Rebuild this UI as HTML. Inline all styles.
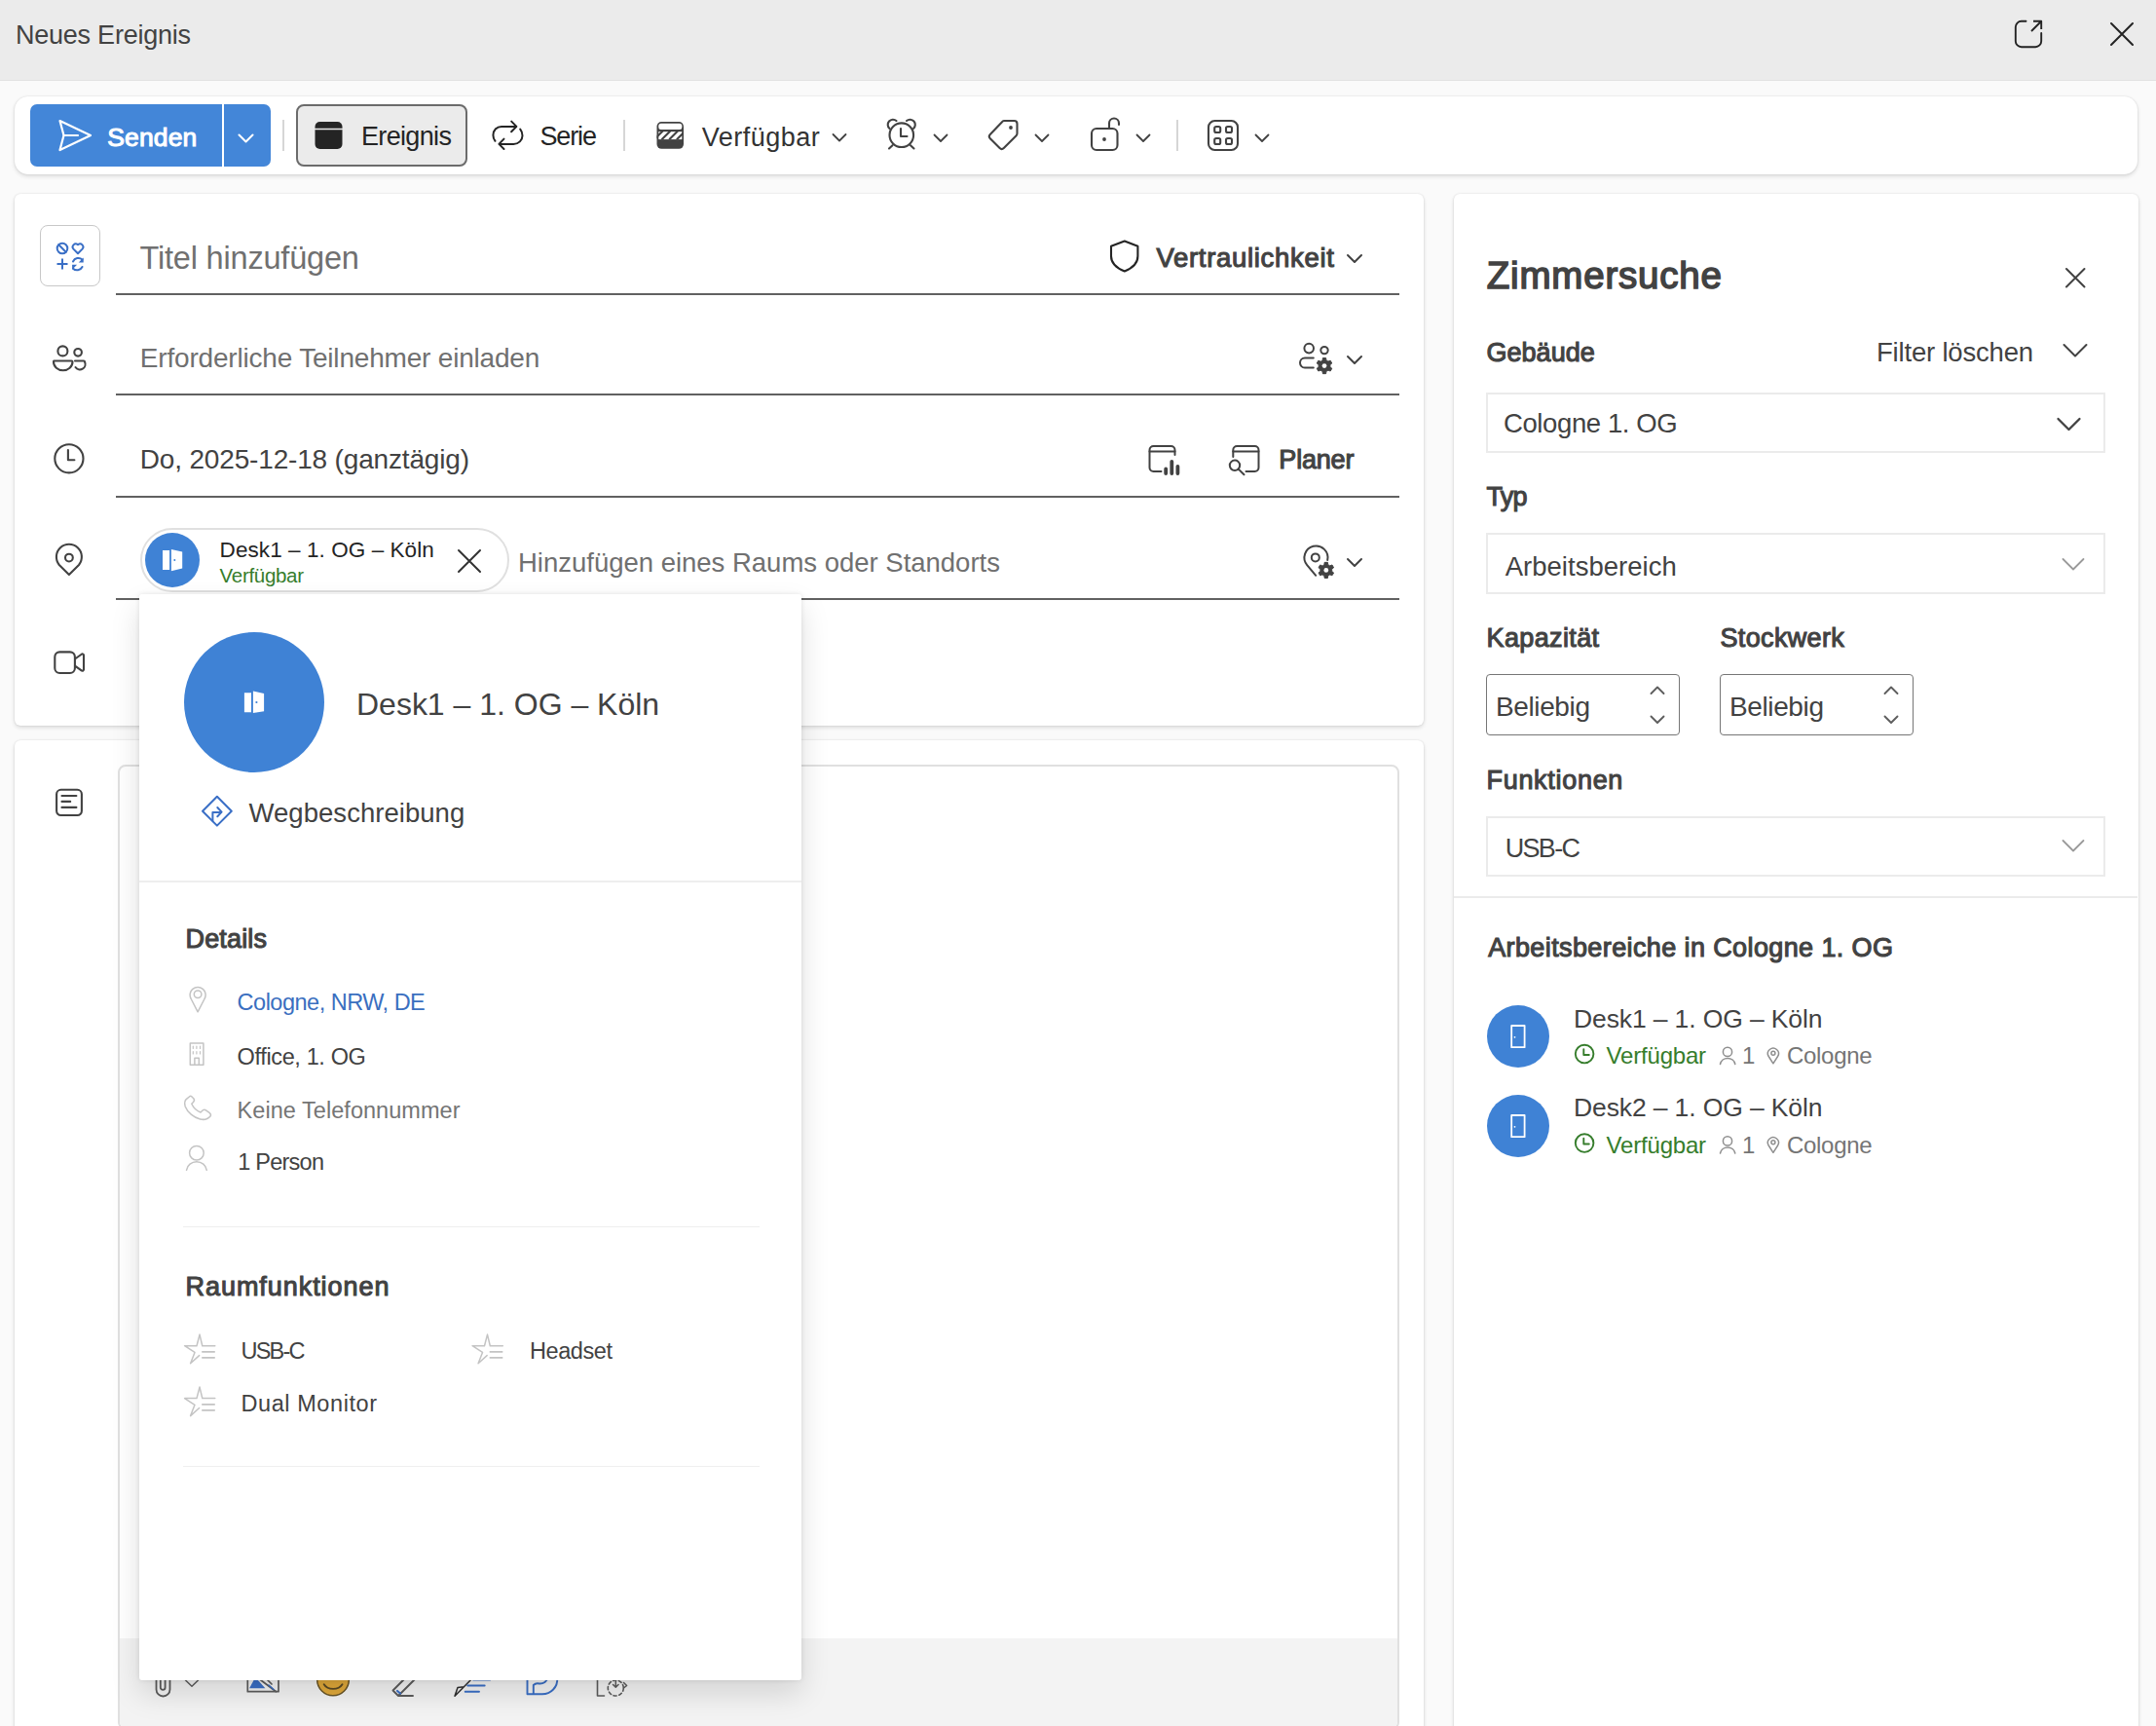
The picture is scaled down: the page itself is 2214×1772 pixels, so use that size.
<!DOCTYPE html>
<html><head><meta charset="utf-8"><title>Neues Ereignis</title>
<style>
html,body{margin:0;padding:0;}
body{width:2214px;height:1772px;position:relative;overflow:hidden;background:#fafafa;font-family:"Liberation Sans",sans-serif;}
.a{position:absolute;box-sizing:border-box;}
.t{position:absolute;white-space:nowrap;line-height:1;font-family:"Liberation Sans",sans-serif;}
svg{position:absolute;overflow:visible;}
</style></head><body>
<!-- title bar -->
<div class="a" style="left:0;top:0;width:2214px;height:82px;background:#ebebeb;"></div>
<div class="a" style="left:0;top:82px;width:2214px;height:1px;background:#e2e2e2;"></div>
<!-- toolbar card -->
<div class="a" style="left:14.5px;top:98.5px;width:2180.5px;height:80.5px;background:#fff;border-radius:14px;box-shadow:0 2px 4px rgba(0,0,0,.13),0 0 2px rgba(0,0,0,.12);"></div>
<!-- send button -->
<div class="a" style="left:31px;top:107px;width:247px;height:64px;background:#4386d8;border-radius:7px;"></div>
<div class="a" style="left:228px;top:107px;width:2px;height:64px;background:#fff;"></div>
<!-- separators -->
<div class="a" style="left:290px;top:123px;width:2px;height:32px;background:#d6d6d6;"></div>
<div class="a" style="left:640px;top:123px;width:2px;height:32px;background:#d6d6d6;"></div>
<div class="a" style="left:1208px;top:123px;width:2px;height:32px;background:#d6d6d6;"></div>
<!-- Ereignis button -->
<div class="a" style="left:304px;top:107px;width:176px;height:64px;background:#ebebeb;border:2px solid #6b6b6b;border-radius:8px;"></div>

<!-- card 1 -->
<div class="a" style="left:14.5px;top:198.5px;width:1447px;height:546px;background:#fff;border-radius:6px;box-shadow:0 2px 4px rgba(0,0,0,.13),0 0 2px rgba(0,0,0,.12);"></div>
<!-- card 2 -->
<div class="a" style="left:14.5px;top:759.5px;width:1447px;height:1100px;background:#fff;border-radius:6px;box-shadow:0 2px 4px rgba(0,0,0,.13),0 0 2px rgba(0,0,0,.12);"></div>
<!-- right panel -->
<div class="a" style="left:1492.5px;top:198.5px;width:703px;height:1650px;background:#fff;border-radius:6px;box-shadow:0 2px 4px rgba(0,0,0,.13),0 0 2px rgba(0,0,0,.12);"></div>

<!-- icon box -->
<div class="a" style="left:41.3px;top:231.2px;width:61.4px;height:63.3px;border:1.6px solid #c8c8c8;border-radius:8px;background:#fff;"></div>
<!-- underlines -->
<div class="a" style="left:119px;top:301px;width:1318px;height:2px;background:#616161;"></div>
<div class="a" style="left:119px;top:404px;width:1318px;height:2px;background:#616161;"></div>
<div class="a" style="left:119px;top:509px;width:1318px;height:2px;background:#616161;"></div>
<div class="a" style="left:119px;top:614px;width:1318px;height:2px;background:#616161;"></div>
<!-- chip -->
<div class="a" style="left:143.5px;top:541.5px;width:379px;height:66.5px;border:2px solid #e0e0e0;border-radius:34px;background:#fff;"></div>
<div class="a" style="left:149px;top:547px;width:56px;height:56px;border-radius:50%;background:#3f82d5;"></div>

<!-- editor -->
<div class="a" style="left:121px;top:784.5px;width:1315.5px;height:991px;border:2px solid #e0e0e0;border-radius:8px;background:#fff;overflow:hidden;">
  <div class="a" style="left:0;top:895.5px;width:1315px;height:100px;background:#f3f3f3;"></div>
</div>

<div class="t" style="left:16.0px;top:23.4px;font-size:27px;font-weight:400;color:#424242;letter-spacing:-0.24px;">Neues Ereignis</div>
<div class="t" style="left:110.2px;top:127.5px;font-size:26.5px;font-weight:400;color:#fff;letter-spacing:0.16px;-webkit-text-stroke:1.06px #fff;">Senden</div>
<div class="t" style="left:371.0px;top:127.0px;font-size:27px;font-weight:400;color:#242424;letter-spacing:-0.66px;">Ereignis</div>
<div class="t" style="left:554.5px;top:127.0px;font-size:27px;font-weight:400;color:#242424;letter-spacing:-1.14px;">Serie</div>
<div class="t" style="left:720.7px;top:127.6px;font-size:27px;font-weight:400;color:#333333;letter-spacing:0.49px;">Verfügbar</div>
<div class="t" style="left:143.5px;top:249.4px;font-size:32.5px;font-weight:400;color:#707070;letter-spacing:-0.19px;">Titel hinzufügen</div>
<div class="t" style="left:1187.5px;top:250.6px;font-size:27.5px;font-weight:400;color:#424242;letter-spacing:0.69px;-webkit-text-stroke:1.10px #424242;">Vertraulichkeit</div>
<div class="t" style="left:143.8px;top:354.2px;font-size:28px;font-weight:400;color:#707070;letter-spacing:-0.19px;">Erforderliche Teilnehmer einladen</div>
<div class="t" style="left:143.8px;top:458.2px;font-size:28px;font-weight:400;color:#424242;letter-spacing:-0.17px;">Do, 2025-12-18 (ganztägig)</div>
<div class="t" style="left:1313.3px;top:459.1px;font-size:27.0px;font-weight:400;color:#424242;letter-spacing:-0.18px;-webkit-text-stroke:1.08px #424242;">Planer</div>
<div class="t" style="left:225.6px;top:553.5px;font-size:22.5px;font-weight:400;color:#242424;letter-spacing:0.07px;">Desk1 – 1. OG – Köln</div>
<div class="t" style="left:225.6px;top:580.6px;font-size:20.5px;font-weight:400;color:#367d2c;letter-spacing:-0.31px;">Verfügbar</div>
<div class="t" style="left:532.0px;top:563.6px;font-size:27.5px;font-weight:400;color:#707070;letter-spacing:-0.01px;">Hinzufügen eines Raums oder Standorts</div>
<svg style="left:0;top:0" width="2214" height="1772" viewBox="0 0 2214 1772" fill="none" stroke-linecap="round" stroke-linejoin="round">
<!-- title bar popout -->
<g stroke="#242424" stroke-width="1.9">
  <path d="M2080.5,21.8 H2075.8 A6,6 0 0 0 2069.8,27.8 V42.2 A6,6 0 0 0 2075.8,48.2 H2090.2 A6,6 0 0 0 2096.2,42.2 V34"/>
  <path d="M2086,32 L2095.5,22.5 M2088,21.8 H2096.2 V30" stroke-linecap="butt"/>
  <path d="M2168,24 L2190,46 M2190,24 L2168,46" stroke-width="2"/>
</g>
<!-- send icon -->
<g stroke="#fff" stroke-width="2.2">
  <path d="M61.5,124 L93,139 L61.5,154 L65.5,139 Z"/>
  <path d="M65.5,139 H80"/>
  <path d="M245.5,138.5 L252.5,145.5 L259.5,138.5" stroke-width="2"/>
</g>
<!-- Ereignis icon -->
<rect x="323.5" y="125" width="28" height="28" rx="5" fill="#242424"/>
<path d="M323.5,132.5 H351.5" stroke="#ebebeb" stroke-width="1.6"/>
<!-- Serie icon -->
<g stroke="#242424" stroke-width="2">
  <path d="M508.5,144.8 C507,142.8 506.4,140.8 506.4,138.7 C506.4,133.8 510,129.9 515,129.9 H530"/>
  <path d="M525.2,124.6 L530.4,129.9 L525.1,135.3"/>
  <path d="M534.2,132.6 C535.7,134.5 536.5,136.8 536.5,139.2 C536.5,144 532.5,147.9 527.3,147.9 H513"/>
  <path d="M517.5,142.6 L512.4,147.9 L517.5,153"/>
</g>
<!-- Verfuegbar icon -->
<defs><clipPath id="vb"><rect x="674.5" y="125" width="27.5" height="27.8" rx="4.8"/></clipPath>
<clipPath id="vb2"><rect x="674" y="135" width="30" height="8.2"/></clipPath></defs>
<g clip-path="url(#vb)">
  <rect x="674" y="124" width="30" height="30" fill="#424242"/>
  <rect x="676.3" y="126.8" width="24" height="6.3" rx="2.5" fill="#fff"/>
  <rect x="676.3" y="135.2" width="24" height="7.9" fill="#fff"/>
  <g clip-path="url(#vb2)" stroke="#424242" stroke-width="2.1" stroke-linecap="butt">
    <path d="M680.6,134.5 L671.8,143.3 M688.3,134.5 L679.5,143.3 M696,134.5 L687.2,143.3 M703.7,134.5 L694.9,143.3"/>
  </g>
</g>
<g stroke="#424242" stroke-width="1.8">
  <path d="M855.5,138 L862,144.5 L868.5,138"/>
  <path d="M959.5,138.5 L966,145 L972.5,138.5"/>
  <path d="M1063.5,138.5 L1070,145 L1076.5,138.5"/>
  <path d="M1167.5,138.5 L1174,145 L1180.5,138.5"/>
  <path d="M1289.5,138.5 L1296,145 L1302.5,138.5"/>
</g>
<!-- alarm -->
<g stroke="#424242" stroke-width="2.1">
  <circle cx="925.8" cy="138.7" r="12.3"/>
  <path d="M913.5,132 A5.2,5.2 0 0 1 920.5,124"/>
  <path d="M938,132 A5.2,5.2 0 0 0 931,124"/>
  <path d="M925,132 V140 H931.5"/>
  <path d="M913,152.5 L916.5,149.2 M938.5,152.5 L935,149.2"/>
</g>
<!-- tag -->
<g stroke="#424242" stroke-width="2.1">
  <path d="M1031,124 H1041.5 A3,3 0 0 1 1044.5,127 V137 A3,3 0 0 1 1043.6,139.2 L1030.8,152 A3,3 0 0 1 1026.6,152 L1016.8,142.2 A3,3 0 0 1 1016.8,138 L1029,125.2 A3,3 0 0 1 1031,124 Z"/>
</g>
<circle cx="1038" cy="131" r="1.9" fill="#424242"/>
<!-- lock -->
<g stroke="#424242" stroke-width="2.1">
  <rect x="1121" y="132" width="26.5" height="22" rx="5"/>
  <path d="M1139,132 V126.5 A5,5 0 0 1 1149,126.5 V128"/>
</g>
<circle cx="1134" cy="143" r="1.9" fill="#424242"/>
<!-- apps -->
<g stroke="#424242" stroke-width="2.1">
  <rect x="1241" y="124" width="30" height="30" rx="6.5"/>
  <rect x="1247.2" y="130" width="6" height="6" rx="1.8"/>
  <rect x="1259" y="130" width="6" height="6" rx="1.8"/>
  <rect x="1247.2" y="142" width="6" height="6" rx="1.8"/>
  <rect x="1259" y="142" width="6" height="6" rx="1.8"/>
</g>

<!-- icon box contents (blue) -->
<g stroke="#3a6fc6" stroke-width="2">
  <circle cx="64" cy="255" r="5.3"/>
  <path d="M60.3,251.3 L67.7,258.7"/>
  <path d="M80,260.3 L75.4,255.6 A3.2,3.2 0 0 1 79.8,251 L80,251.2 L80.2,251 A3.2,3.2 0 0 1 84.6,255.6 Z"/>
  <path d="M58.5,271 H69.5 M64,265.5 V276.5" stroke-linecap="butt"/>
  <path d="M75,268.5 A6,6 0 0 1 84.5,266.5"/>
  <path d="M84.5,274 A6,6 0 0 1 75,275.7"/>
</g>
<path d="M85.7,264.5 V269.5 H80.7 Z M74.1,276.7 V271.7 H79.1 Z" fill="#3a6fc6"/>

<!-- left column icons -->
<g stroke="#424242" stroke-width="2.1">
  <circle cx="64.4" cy="360.4" r="5"/>
  <circle cx="80.1" cy="361.8" r="3.8"/>
  <path d="M55.5,370.5 H73.5 A1,1 0 0 1 74.5,371.5 A9.5,8.5 0 0 1 55,371.5 A1,1 0 0 1 55.5,370.5 Z"/>
  <path d="M77,370.5 H86 A1,1 0 0 1 87,371.5 A5.5,5.5 0 0 1 77.5,377"/>
  <circle cx="70.9" cy="470.8" r="14.6"/>
  <path d="M69.9,462 V472.2 H76.4"/>
  <path d="M70.9,590 L81,580 A13,13 0 1 0 60.8,580 Z"/>
  <circle cx="70.9" cy="572.6" r="3.9"/>
  <rect x="56.3" y="669.4" width="20.6" height="21.6" rx="5"/>
  <path d="M77,676.5 L84,671.5 A1.5,1.5 0 0 1 86,672.8 V687.4 A1.5,1.5 0 0 1 84,688.6 L77,683.6"/>
  <rect x="58.1" y="810.8" width="25.8" height="26.2" rx="4.5"/>
  <path d="M63.5,817 H78.4 M63.5,822.9 H72.2 M63.5,828.9 H78.4"/>
</g>

<!-- shield -->
<path d="M1154.8,247.5 L1141,252.8 V263 C1141,270 1146,275 1154.8,278.4 C1163.6,275 1168.4,270 1168.4,263 V252.8 Z" stroke="#242424" stroke-width="2.1"/>
<path d="M1384,262 L1391,269 L1398,262" stroke="#424242" stroke-width="2"/>

<!-- people gear -->
<g stroke="#424242" stroke-width="2">
  <circle cx="1344.2" cy="357.6" r="4.8"/>
  <circle cx="1360" cy="359.6" r="3.7"/>
  <path d="M1348.8,367.6 H1340 A5,5 0 0 0 1340,377.6 H1348.8"/>
  <path d="M1384,366 L1391,373 L1398,366"/>
</g>
<!-- gears -->
<path d="M1358.09,369.91 L1358.38,367.56 L1361.62,367.56 L1361.91,369.91 L1363.97,371.10 L1366.15,370.18 L1367.77,372.98 L1365.88,374.41 L1365.88,376.79 L1367.77,378.22 L1366.15,381.02 L1363.97,380.10 L1361.91,381.29 L1361.62,383.64 L1358.38,383.64 L1358.09,381.29 L1356.03,380.10 L1353.85,381.02 L1352.23,378.22 L1354.12,376.79 L1354.12,374.41 L1352.23,372.98 L1353.85,370.18 L1356.03,371.10 Z" fill="#424242" stroke="#424242" stroke-width="1" stroke-linejoin="round"/>
<circle cx="1360" cy="375.6" r="2.4" fill="#fff"/>
<!-- calendar chart -->
<g stroke="#424242" stroke-width="2">
  <path d="M1192.5,484 H1184.5 A4,4 0 0 1 1180.5,480 V462 A4,4 0 0 1 1184.5,458 H1202.5 A4,4 0 0 1 1206.5,462 V467"/>
  <path d="M1180.5,463.6 H1206.5"/>
  <path d="M1197.2,481.5 V486 M1203.3,473.8 V486 M1209.4,478.8 V486" stroke-width="3.8"/>
</g>
<!-- planer icon -->
<g stroke="#424242" stroke-width="2">
  <path d="M1266.3,469 V462 A4,4 0 0 1 1270.3,458 H1288.5 A4,4 0 0 1 1292.5,462 V480 A4,4 0 0 1 1288.5,484 H1279.5"/>
  <path d="M1266.3,463.6 H1292.5"/>
  <circle cx="1268" cy="477.8" r="5.2"/>
  <path d="M1271.8,481.6 L1277.5,487.3"/>
</g>
<!-- chip door icon -->
<path d="M167,565 H174.1 V585 H167 Z M175.9,564 L187.2,566.5 V583.4 L175.9,586.3 Z" fill="#fff"/>
<circle cx="179.3" cy="575" r="1" fill="#3f82d5"/>
<path d="M471,565 L493,587 M493,565 L471,587" stroke="#333333" stroke-width="2"/>
<!-- pin gear -->
<g stroke="#424242" stroke-width="2">
  <path d="M1351.2,590.8 L1342.2,580.1 A12,12 0 1 1 1363.2,575"/>
  <circle cx="1350.8" cy="572.4" r="4"/>
  <path d="M1384,574 L1391,581 L1398,574"/>
</g>
<path d="M1359.89,579.71 L1360.18,577.36 L1363.42,577.36 L1363.71,579.71 L1365.77,580.90 L1367.95,579.98 L1369.57,582.78 L1367.68,584.21 L1367.68,586.59 L1369.57,588.02 L1367.95,590.82 L1365.77,589.90 L1363.71,591.09 L1363.42,593.44 L1360.18,593.44 L1359.89,591.09 L1357.83,589.90 L1355.65,590.82 L1354.03,588.02 L1355.92,586.59 L1355.92,584.21 L1354.03,582.78 L1355.65,579.98 L1357.83,580.90 Z" fill="#424242" stroke="#424242" stroke-width="1" stroke-linejoin="round"/>
<circle cx="1361.8" cy="585.4" r="2.4" fill="#fff"/>

<!-- editor toolbar icons (mostly hidden) -->
<g stroke="#5c5c5c" stroke-width="1.8" fill="none">
  <path d="M160.5,1712 V1734.5 A7,7 0 0 0 174.5,1734.5 V1712"/>
  <path d="M164.8,1712 V1732.5 A2.4,2.4 0 0 0 169.6,1732.5 V1712"/>
  <path d="M190.5,1725 L197,1731.3 L203.5,1725" stroke-width="1.5"/>
  <path d="M254.3,1712 V1736.7 H286 V1712" stroke-width="1.7"/>
  <path d="M264,1722 L283.5,1736.7 M272,1722 L279,1729" stroke-width="1.7"/>
  <path d="M403.5,1735.5 L418,1721 M403.5,1735.5 L409,1741 L428,1722 M409,1741 H424" stroke-width="1.9"/>
  <path d="M467,1741.2 L470,1732.5 L476.4,1731.8 L492,1716 M467,1741.2 L476.4,1731.8" stroke="#2e2e2e" stroke-width="1.5"/>
  <path d="M613.5,1722 V1741 H620.5" stroke-width="1.6"/>
  <circle cx="632.3" cy="1733" r="8" stroke-dasharray="3.2 2.6" stroke-width="1.6"/>
  <path d="M632.3,1722 V1732 M629.5,1729.5 L632.3,1732.3 L635,1729.5 M640.5,1727.5 L643.6,1730.5 L640.5,1733" stroke-width="1.5"/>
</g>
<path d="M256.1,1733.3 L262.2,1722 L272.4,1733.3 Z" fill="#3a6fc6"/>
<path d="M276,1730 L281,1734.5" stroke="#3a6fc6" stroke-width="1.5"/>
<circle cx="342" cy="1724.5" r="16.3" fill="#e0a93a" stroke="#6a5526" stroke-width="1.5"/>
<path d="M332.7,1729.2 A10.5,8.5 0 0 0 351.5,1729.2" stroke="#5a4a26" stroke-width="1.9"/>
<path d="M408,1736 L411,1738.5" stroke="#3a6fc6" stroke-width="2.2"/>
<g stroke="#3a6fc6" stroke-width="1.9" fill="none">
  <path d="M480.2,1730.5 H497.7 M477.7,1736.8 H492 M486,1724.5 H503.3"/>
  <path d="M541.5,1720 V1739.3 H556.6 A15.5,15 0 0 0 572.2,1723"/>
  <path d="M547.8,1739 V1730 A6,6 0 0 1 553.8,1728.5 A8.5,8.5 0 0 0 562.8,1722"/>
</g>
</svg>


<!-- popup -->
<div class="a" style="left:143px;top:609.5px;width:680px;height:1115px;background:#fff;border-radius:3px;box-shadow:0 14px 30px rgba(0,0,0,.13),0 0 5px rgba(0,0,0,.10);">
  <div class="a" style="left:0;top:294px;width:680px;height:2px;background:#eeeeee;"></div>
  <div class="a" style="left:45px;top:649px;width:592px;height:1.5px;background:#efefef;"></div>
  <div class="a" style="left:45px;top:895px;width:592px;height:1.5px;background:#efefef;"></div>
</div>
<div class="a" style="left:189px;top:649px;width:144px;height:144px;border-radius:50%;background:#3f82d5;"></div>
<div class="t" style="left:366.0px;top:706.8px;font-size:32px;font-weight:400;color:#424242;letter-spacing:-0.01px;">Desk1 – 1. OG – Köln</div>
<div class="t" style="left:255.5px;top:821.3px;font-size:27.5px;font-weight:400;color:#424242;letter-spacing:0.04px;">Wegbeschreibung</div>
<div class="t" style="left:190.5px;top:950.5px;font-size:27.0px;font-weight:400;color:#424242;letter-spacing:0.16px;-webkit-text-stroke:1.08px #424242;">Details</div>
<div class="t" style="left:243.6px;top:1018.4px;font-size:23.5px;font-weight:400;color:#3a6fc0;letter-spacing:-0.50px;">Cologne, NRW, DE</div>
<div class="t" style="left:243.6px;top:1074.3px;font-size:23.5px;font-weight:400;color:#424242;letter-spacing:-0.37px;">Office, 1. OG</div>
<div class="t" style="left:243.6px;top:1128.8px;font-size:23.5px;font-weight:400;color:#757575;letter-spacing:0.04px;">Keine Telefonnummer</div>
<div class="t" style="left:244.3px;top:1182.4px;font-size:23.5px;font-weight:400;color:#424242;letter-spacing:-0.77px;">1 Person</div>
<div class="t" style="left:190.5px;top:1307.6px;font-size:27.0px;font-weight:400;color:#424242;letter-spacing:0.95px;-webkit-text-stroke:1.08px #424242;">Raumfunktionen</div>
<div class="t" style="left:247.5px;top:1375.6px;font-size:23.5px;font-weight:400;color:#424242;letter-spacing:-1.80px;">USB-C</div>
<div class="t" style="left:544.0px;top:1375.6px;font-size:23.5px;font-weight:400;color:#424242;letter-spacing:-0.42px;">Headset</div>
<div class="t" style="left:247.5px;top:1429.8px;font-size:23.5px;font-weight:400;color:#424242;letter-spacing:0.57px;">Dual Monitor</div>
<svg style="left:0;top:0" width="2214" height="1772" viewBox="0 0 2214 1772" fill="none" stroke-linecap="round" stroke-linejoin="round">
<!-- big door -->
<path d="M250.9,711.2 H258 V731.2 H250.9 Z M259.9,709.5 L271.1,712 V730.3 L259.9,732.1 Z" fill="#fff"/>
<circle cx="263.4" cy="721" r="1.1" fill="#3f82d5"/>
<!-- wegbeschreibung -->
<g stroke="#3a6fc6" stroke-width="2">
  <path d="M222.9,817.8 L237.8,832.7 L222.9,847.6 L208,832.7 Z"/>
  <path d="M218.4,842.5 V834 H227"/>
  <path d="M223.3,829 L227.6,833.6 L223.3,838.2"/>
</g>
<!-- details icons -->
<g stroke="#c4c4c4" stroke-width="1.5">
  <path d="M203.1,1038.8 L210,1025.5 A8,8 0 1 0 196.2,1025.5 Z"/>
  <circle cx="203.1" cy="1020.8" r="3.8"/>
  <rect x="195.3" y="1071" width="13.6" height="22.2"/>
  <path d="M199.9,1093 V1086.3 H204.3 V1093"/>
  <path d="M198.3,1074 V1076.5 M201.9,1074 V1076.5 M205.5,1074 V1076.5 M198.3,1079.5 V1082 M201.9,1079.5 V1082 M205.5,1079.5 V1082" stroke-width="1.2"/>
  <path d="M192.5,1127.5 C190,1129 188.8,1131.5 190.2,1136 C192.5,1142 199,1147.5 205.5,1149 C210,1150 213.5,1149 216,1146 C217,1144.5 216.5,1143.5 215,1142.3 L211.5,1139.8 C210,1138.8 208.8,1139 207.5,1140.5 L206,1142 C202,1140.5 198.5,1137 196.8,1133.3 L198.5,1131.5 C199.8,1130.2 199.8,1129 198.8,1127.8 L196.5,1125.5 C195.3,1124.5 194,1126.5 192.5,1127.5 Z"/>
  <circle cx="201.9" cy="1183.7" r="7.3"/>
  <path d="M191.5,1201.3 A10.5,10 0 0 1 212.3,1201.3"/>
</g>
<!-- stars -->
<g id="star" stroke="#c4c4c4" stroke-width="1.5">
  <path d="M204.6,1391.6 L195.6,1399.7 L200,1388.4 L189.6,1381.7 H202 L205,1370.1 L207.8,1381.7 H220.8"/>
  <path d="M207.2,1387.9 H220.8 M207.2,1393.9 H220.8" stroke-width="1.8" stroke-linecap="butt"/>
</g>
<use href="#star" x="0" y="53.9"/>
<use href="#star" x="295.5" y="0"/>
</svg>


<!-- right panel parts -->
<div class="a" style="left:1526px;top:403px;width:636px;height:62px;border:2px solid #ebebeb;"></div>
<div class="a" style="left:1526px;top:547px;width:636px;height:63px;border:2px solid #ebebeb;"></div>
<div class="a" style="left:1526px;top:692px;width:199px;height:63px;border:1.7px solid #767676;border-radius:4px;"></div>
<div class="a" style="left:1766px;top:692px;width:199px;height:63px;border:1.7px solid #767676;border-radius:4px;"></div>
<div class="a" style="left:1526px;top:838px;width:636px;height:62px;border:2px solid #ebebeb;"></div>
<div class="a" style="left:1493px;top:920px;width:702px;height:2px;background:#ebebeb;"></div>
<div class="a" style="left:1527px;top:1032px;width:64px;height:64px;border-radius:50%;background:#3f82d5;"></div>
<div class="a" style="left:1527px;top:1124px;width:64px;height:64px;border-radius:50%;background:#3f82d5;"></div>
<div class="t" style="left:1526.8px;top:263.5px;font-size:38.5px;font-weight:400;color:#424242;letter-spacing:0.80px;-webkit-text-stroke:1.54px #424242;">Zimmersuche</div>
<div class="t" style="left:1526.5px;top:348.6px;font-size:27.0px;font-weight:400;color:#424242;letter-spacing:0.02px;-webkit-text-stroke:1.08px #424242;">Gebäude</div>
<div class="t" style="left:1927.0px;top:348.1px;font-size:27.5px;font-weight:400;color:#424242;letter-spacing:-0.19px;">Filter löschen</div>
<div class="t" style="left:1544.0px;top:421.3px;font-size:27.5px;font-weight:400;color:#424242;letter-spacing:-0.39px;">Cologne 1. OG</div>
<div class="t" style="left:1526.5px;top:497.1px;font-size:27.0px;font-weight:400;color:#424242;letter-spacing:-0.78px;-webkit-text-stroke:1.08px #424242;">Typ</div>
<div class="t" style="left:1545.7px;top:568.4px;font-size:27.5px;font-weight:400;color:#424242;letter-spacing:0.02px;">Arbeitsbereich</div>
<div class="t" style="left:1526.5px;top:642.3px;font-size:27.0px;font-weight:400;color:#424242;letter-spacing:0.38px;-webkit-text-stroke:1.08px #424242;">Kapazität</div>
<div class="t" style="left:1766.5px;top:642.3px;font-size:27.0px;font-weight:400;color:#424242;letter-spacing:0.34px;-webkit-text-stroke:1.08px #424242;">Stockwerk</div>
<div class="t" style="left:1536.0px;top:712.0px;font-size:28px;font-weight:400;color:#424242;letter-spacing:-0.38px;">Beliebig</div>
<div class="t" style="left:1776.0px;top:712.0px;font-size:28px;font-weight:400;color:#424242;letter-spacing:-0.38px;">Beliebig</div>
<div class="t" style="left:1526.5px;top:787.8px;font-size:27.0px;font-weight:400;color:#424242;letter-spacing:0.70px;-webkit-text-stroke:1.08px #424242;">Funktionen</div>
<div class="t" style="left:1545.7px;top:857.5px;font-size:27px;font-weight:400;color:#424242;letter-spacing:-1.67px;">USB-C</div>
<div class="t" style="left:1528.2px;top:959.6px;font-size:27.0px;font-weight:400;color:#424242;letter-spacing:0.39px;-webkit-text-stroke:1.08px #424242;">Arbeitsbereiche in Cologne 1. OG</div>
<div class="t" style="left:1616.0px;top:1032.5px;font-size:26.5px;font-weight:400;color:#424242;letter-spacing:-0.12px;">Desk1 – 1. OG – Köln</div>
<div class="t" style="left:1649.6px;top:1072.1px;font-size:24px;font-weight:400;color:#367d2c;letter-spacing:-0.20px;">Verfügbar</div>
<div class="t" style="left:1789.0px;top:1072.1px;font-size:24px;font-weight:400;color:#757575;letter-spacing:0.00px;">1</div>
<div class="t" style="left:1835.0px;top:1072.1px;font-size:24px;font-weight:400;color:#757575;letter-spacing:-0.30px;">Cologne</div>
<div class="t" style="left:1616.0px;top:1123.5px;font-size:26.5px;font-weight:400;color:#424242;letter-spacing:-0.12px;">Desk2 – 1. OG – Köln</div>
<div class="t" style="left:1649.6px;top:1163.6px;font-size:24px;font-weight:400;color:#367d2c;letter-spacing:-0.20px;">Verfügbar</div>
<div class="t" style="left:1789.0px;top:1163.6px;font-size:24px;font-weight:400;color:#757575;letter-spacing:0.00px;">1</div>
<div class="t" style="left:1835.0px;top:1163.6px;font-size:24px;font-weight:400;color:#757575;letter-spacing:-0.30px;">Cologne</div>
<svg style="left:0;top:0" width="2214" height="1772" viewBox="0 0 2214 1772" fill="none" stroke-linecap="round" stroke-linejoin="round">
<g stroke="#424242" stroke-width="2">
  <path d="M2122,276 L2140.5,294.5 M2140.5,276 L2122,294.5"/>
  <path d="M2119.5,354 L2131,365.5 L2142.5,354"/>
  <path d="M2113.5,430 L2124.5,441 L2135.5,430" stroke-width="2.3"/>
  <path d="M1695.5,712 L1702,705.5 L1708.5,712 M1695.5,735.5 L1702,742 L1708.5,735.5" stroke="#5e5e5e" stroke-width="1.9"/>
  <path d="M1935.5,712 L1942,705.5 L1948.5,712 M1935.5,735.5 L1942,742 L1948.5,735.5" stroke="#5e5e5e" stroke-width="1.9"/>
</g>
<g stroke="#9a9a9a" stroke-width="1.8">
  <path d="M2118.5,574 L2129,584.5 L2139.5,574"/>
  <path d="M2118.5,863 L2129,873.5 L2139.5,863"/>
</g>
<!-- avatar doors -->
<g stroke="#fff" stroke-width="1.8">
  <rect x="1552.2" y="1053" width="13.4" height="22.2"/>
  <rect x="1552.2" y="1145" width="13.4" height="22.2"/>
</g>
<circle cx="1555.5" cy="1064.8" r="0.9" fill="#fff"/>
<circle cx="1555.5" cy="1156.8" r="0.9" fill="#fff"/>
<!-- status rows -->
<g id="srow">
  <g stroke="#367d2c" stroke-width="1.9">
    <circle cx="1627.1" cy="1082.1" r="9.3"/>
    <path d="M1626.3,1077.2 V1083 H1631.8"/>
  </g>
  <g stroke="#8f8f8f" stroke-width="1.5">
    <circle cx="1774" cy="1079.9" r="4.6"/>
    <path d="M1766.5,1092.5 A7.8,7.5 0 0 1 1781.8,1092.5"/>
    <path d="M1820.9,1091.8 L1825.6,1084.5 A5.5,5.5 0 1 0 1816.2,1084.5 Z"/>
    <circle cx="1820.9" cy="1081.2" r="2"/>
  </g>
</g>
<use href="#srow" x="0" y="91.5"/>
</svg>


</body></html>
